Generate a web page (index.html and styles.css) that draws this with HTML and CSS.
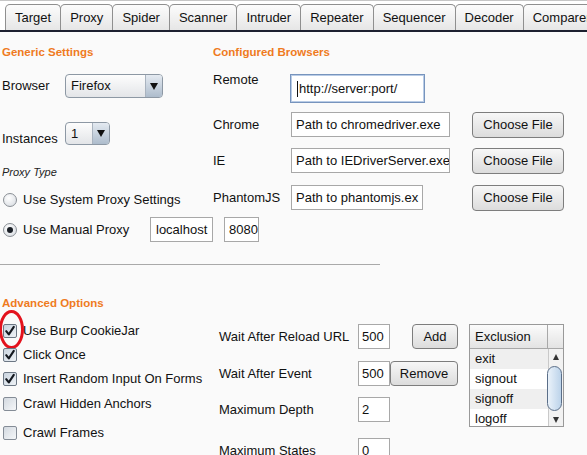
FILE: index.html
```html
<!DOCTYPE html>
<html>
<head>
<meta charset="utf-8">
<link rel="stylesheet" href="styles.css">
</head>
<body>
<div class="tabbar">
  <div class="tab">Target</div>
  <div class="tab">Proxy</div>
  <div class="tab">Spider</div>
  <div class="tab">Scanner</div>
  <div class="tab">Intruder</div>
  <div class="tab">Repeater</div>
  <div class="tab">Sequencer</div>
  <div class="tab">Decoder</div>
  <div class="tab">Comparer</div>
</div>
<div class="top">
  <div class="generic">
    <div class="heading">Generic Settings</div>
    <div class="row browser-row">
      <span class="lbl-browser">Browser</span>
      <div class="select sel-browser"><span class="sel-text">Firefox</span><span class="sel-arrow"><span class="tri"></span></span></div>
    </div>
    <div class="row instances-row">
      <span class="lbl-instances">Instances</span>
      <div class="select sel-inst"><span class="sel-text">1</span><span class="sel-arrow"><span class="tri"></span></span></div>
    </div>
    <div class="proxy-type">Proxy Type</div>
    <div class="radio-row r1"><span class="radio"></span><span class="opt">Use System Proxy Settings</span></div>
    <div class="radio-row r2"><span class="radio checked"></span><span class="opt opt-manual">Use Manual Proxy</span><div class="field host">localhost</div><div class="field port">8080</div></div>
  </div>
  <div class="browsers">
    <div class="heading">Configured Browsers</div>
    <div class="brow remote-row">
      <span class="blabel top-label">Remote</span>
      <div class="field remote"><span class="caret"></span>http://server:port/</div>
    </div>
    <div class="brow chrome-row">
      <span class="blabel">Chrome</span>
      <div class="path-cell"><div class="field path w159">Path to chromedriver.exe</div></div>
      <div class="button choose">Choose File</div>
    </div>
    <div class="brow ie-row">
      <span class="blabel">IE</span>
      <div class="path-cell"><div class="field path w159">Path to IEDriverServer.exe</div></div>
      <div class="button choose">Choose File</div>
    </div>
    <div class="brow phantom-row">
      <span class="blabel">PhantomJS</span>
      <div class="path-cell"><div class="field path w132">Path to phantomjs.ex</div></div>
      <div class="button choose">Choose File</div>
    </div>
  </div>
</div>
<div class="divider"></div>
<div class="advanced">
  <div class="heading adv-heading">Advanced Options</div>
  <div class="adv-body">
    <div class="checks">
      <div class="check-row c1">
        <span class="checkbox checked"><svg width="12" height="12" viewBox="0 0 12 12"><path d="M2.2 6.2 L4.8 9.4 L9.8 1.8" fill="none" stroke="#14181f" stroke-width="2.1" stroke-linecap="round" stroke-linejoin="round"/></svg></span>
        <span class="opt">Use Burp CookieJar</span>
        <svg class="mark" width="26" height="40" viewBox="0 0 26 40"><ellipse cx="12.5" cy="19.5" rx="11" ry="18" fill="none" stroke="#e3121d" stroke-width="3"/></svg>
      </div>
      <div class="check-row c2">
        <span class="checkbox checked"><svg width="12" height="12" viewBox="0 0 12 12"><path d="M2.2 6.2 L4.8 9.4 L9.8 1.8" fill="none" stroke="#14181f" stroke-width="2.1" stroke-linecap="round" stroke-linejoin="round"/></svg></span>
        <span class="opt">Click Once</span>
      </div>
      <div class="check-row c3">
        <span class="checkbox checked"><svg width="12" height="12" viewBox="0 0 12 12"><path d="M2.2 6.2 L4.8 9.4 L9.8 1.8" fill="none" stroke="#14181f" stroke-width="2.1" stroke-linecap="round" stroke-linejoin="round"/></svg></span>
        <span class="opt">Insert Random Input On Forms</span>
      </div>
      <div class="check-row c4">
        <span class="checkbox"></span>
        <span class="opt">Crawl Hidden Anchors</span>
      </div>
      <div class="check-row c5">
        <span class="checkbox"></span>
        <span class="opt">Crawl Frames</span>
      </div>
    </div>
    <div class="adv-right">
      <div class="adv-form">
        <div class="frow f1">
          <span class="flabel">Wait After Reload URL</span>
          <div class="field num">500</div>
          <div class="button add">Add</div>
        </div>
        <div class="frow f2">
          <span class="flabel">Wait After Event</span>
          <div class="field num">500</div>
          <div class="button remove">Remove</div>
        </div>
        <div class="frow f3">
          <span class="flabel">Maximum Depth</span>
          <div class="field num">2</div>
        </div>
        <div class="frow f4">
          <span class="flabel">Maximum States</span>
          <div class="field num">0</div>
        </div>
      </div>
      <div class="exclusion">
        <div class="ex-head">
          <div class="ex-title">Exclusion</div>
          <div class="ex-corner"></div>
        </div>
        <div class="ex-body">
          <div class="ex-list">
            <div class="ex-item alt">exit</div>
            <div class="ex-item">signout</div>
            <div class="ex-item alt">signoff</div>
            <div class="ex-item">logoff</div>
          </div>
          <div class="scrollbar">
            <span class="arrow up"></span>
            <span class="thumb"></span>
            <span class="arrow down"></span>
          </div>
        </div>
      </div>
    </div>
  </div>
</div>
</body>
</html>
```

FILE: styles.css
```css
html, body {
  margin: 0;
  padding: 0;
}
body {
  width: 587px;
  height: 455px;
  overflow: hidden;
  background: #fafafa;
  color: #111;
  font-family: "Liberation Sans", Arial, sans-serif;
  font-size: 13px;
  line-height: 16px;
}

/* ---------- tabs ---------- */
.tabbar {
  display: flex;
  align-items: flex-end;
  height: 32px;
  box-sizing: border-box;
  border-top: 1px solid #c6c6c6;
  border-bottom: 2px solid #1d2030;
  padding-left: 5px;
  background: #ffffff;
  overflow: hidden;
}
.tab {
  flex-shrink: 0;
  height: 26px;
  box-sizing: border-box;
  padding: 1px 9px 0;
  margin-right: -1px;
  border: 1px solid #8f8f8f;
  border-bottom: none;
  border-radius: 5px 5px 0 0;
  background: linear-gradient(#fcfcfc, #e6e6e6);
  display: flex;
  align-items: center;
  white-space: nowrap;
  color: #111;
}

/* ---------- headings ---------- */
.heading {
  color: #ef7b1e;
  font-weight: bold;
  font-size: 11.5px;
  line-height: 16px;
  height: 16px;
  white-space: nowrap;
}

/* ---------- top section ---------- */
.top {
  display: flex;
  padding-top: 12px;
}
.generic {
  width: 211px;
  padding-left: 2px;
  flex-shrink: 0;
}
.row {
  display: flex;
}
.browser-row {
  margin-top: 14px;
  align-items: center;
  height: 24px;
}
.lbl-browser {
  width: 63px;
  flex-shrink: 0;
}
.instances-row {
  margin-top: 24px;
  align-items: flex-start;
}
.lbl-instances {
  width: 63px;
  flex-shrink: 0;
  margin-top: 9px;
}

.select {
  display: flex;
  box-sizing: border-box;
  border: 1px solid #8d98a4;
  border-radius: 4px;
  background: linear-gradient(#fdfdfd, #e3e5e8);
  overflow: hidden;
  flex-shrink: 0;
}
.sel-browser {
  width: 98px;
  height: 24px;
}
.sel-inst {
  width: 45px;
  height: 23px;
}
.sel-text {
  flex: 1;
  padding-left: 5px;
  display: flex;
  align-items: center;
}
.sel-arrow {
  width: 16px;
  border-left: 1px solid #a9b3bf;
  background: linear-gradient(#e4eaf1, #adbccc);
  display: flex;
  align-items: center;
  justify-content: center;
}
.tri {
  width: 0;
  height: 0;
  border-left: 4px solid transparent;
  border-right: 4px solid transparent;
  border-top: 7px solid #111;
}

.proxy-type {
  margin-top: 18px;
  font-style: italic;
  font-size: 11px;
  line-height: 14px;
  color: #222;
}
.radio-row {
  display: flex;
  align-items: center;
  white-space: nowrap;
}
.r1 {
  margin-top: 10px;
  height: 22px;
}
.r2 {
  margin-top: 6px;
  height: 25px;
}
.radio {
  flex-shrink: 0;
  width: 14px;
  height: 14px;
  box-sizing: border-box;
  margin-left: 1px;
  border: 1px solid #8a8f95;
  border-radius: 50%;
  background: radial-gradient(circle at 40% 35%, #ffffff, #e1e4e8 70%, #c9ced4);
  position: relative;
}
.radio.checked::after {
  content: "";
  position: absolute;
  left: 3px;
  top: 3px;
  width: 6px;
  height: 6px;
  border-radius: 50%;
  background: #1a1f26;
}
.opt {
  margin-left: 6px;
  white-space: nowrap;
}
.opt-manual {
  width: 127px;
  flex-shrink: 0;
}

.field {
  flex-shrink: 0;
  box-sizing: border-box;
  border: 1px solid #a8a8a8;
  background: #ffffff;
  height: 25px;
  padding-left: 4px;
  display: flex;
  align-items: center;
  white-space: nowrap;
  overflow: hidden;
}
.host {
  width: 63px;
  padding-left: 5px;
}
.port {
  width: 35px;
  margin-left: 11px;
  padding-left: 4px;
}

/* ---------- configured browsers ---------- */
.browsers {
  flex: 1;
}
.brow {
  display: flex;
  align-items: flex-start;
}
.blabel {
  width: 78px;
  flex-shrink: 0;
  line-height: 25px;
}
.remote-row {
  margin-top: 12px;
}
.remote-row .blabel {
  width: 77px;
  line-height: 16px;
}
.remote {
  margin-top: 2px;
  width: 135px;
  height: 29px;
  border: 1px solid #7794bd;
  box-shadow: inset 0 0 0 1px #b9cce6;
  padding-left: 6px;
}
.caret {
  width: 1px;
  height: 16px;
  background: #111;
  margin-right: 1px;
}
.chrome-row { margin-top: 9px; }
.ie-row { margin-top: 10px; }
.phantom-row { margin-top: 11px; }
.path-cell {
  width: 181px;
  flex-shrink: 0;
}
.w159 { width: 159px; }
.w132 { width: 132px; }

.button {
  flex-shrink: 0;
  box-sizing: border-box;
  border: 1px solid #7d7d7d;
  border-radius: 4px;
  background: linear-gradient(#f7f7f7, #dcdcdc);
  display: flex;
  align-items: center;
  justify-content: center;
  white-space: nowrap;
  color: #111;
}
.choose {
  width: 92px;
  height: 26px;
}

.divider {
  width: 380px;
  height: 1px;
  background: #a9a9a9;
  margin-top: 22px;
}

/* ---------- advanced ---------- */
.advanced {
  padding-left: 2px;
}
.adv-heading {
  margin-top: 30px;
}
.adv-body {
  display: flex;
  align-items: flex-start;
  margin-top: 10px;
}
.checks {
  width: 217px;
  flex-shrink: 0;
}
.check-row {
  display: flex;
  align-items: center;
  height: 20px;
  position: relative;
}
.c2 { margin-top: 4px; }
.c3 { margin-top: 4px; }
.c4 { margin-top: 5px; }
.c5 { margin-top: 9px; }
.checkbox {
  flex-shrink: 0;
  width: 14px;
  height: 14px;
  box-sizing: border-box;
  margin-left: 1px;
  border: 1px solid #848c96;
  border-radius: 2px;
  background: linear-gradient(135deg, #d3d9e0, #f5f7f9);
  display: flex;
  align-items: center;
  justify-content: center;
}
.checkbox.checked {
  border-color: #6c7784;
  background: linear-gradient(135deg, #c9d3de, #eef2f6);
}
.mark {
  position: absolute;
  left: -3px;
  top: -11px;
}

.adv-right {
  display: flex;
  align-items: flex-start;
  margin-top: 3px;
}
.adv-form {
  width: 239px;
  flex-shrink: 0;
}
.frow {
  display: flex;
  align-items: center;
  height: 25px;
}
.f2 { margin-top: 12px; }
.f3 { margin-top: 11px; }
.f4 { margin-top: 16px; }
.flabel {
  width: 139px;
  flex-shrink: 0;
  white-space: nowrap;
}
.num {
  width: 32px;
  padding-left: 3px;
}
.add {
  width: 46px;
  height: 25px;
  margin-left: 22px;
}
.remove {
  width: 68px;
  height: 25px;
}

.exclusion {
  margin-left: 11px;
  width: 95px;
  height: 103px;
  box-sizing: border-box;
  border: 1px solid #999;
  background: #fff;
  flex-shrink: 0;
  overflow: hidden;
}
.ex-head {
  display: flex;
  height: 23px;
  border-bottom: 1px solid #a8a8a8;
  background: linear-gradient(#fbfbfb, #e3e3e3);
}
.ex-title {
  width: 78px;
  border-right: 1px solid #a8a8a8;
  padding-left: 5px;
  box-sizing: border-box;
  display: flex;
  align-items: center;
}
.ex-corner {
  flex: 1;
}
.ex-body {
  display: flex;
}
.ex-list {
  width: 78px;
}
.ex-item {
  height: 20px;
  line-height: 20px;
  padding-left: 5px;
  background: #ffffff;
}
.ex-item.alt {
  background: #efefef;
}
.scrollbar {
  flex: 1;
  height: 79px;
  border-left: 1px solid #c9c9c9;
  background: #f2f2f2;
  position: relative;
  display: flex;
  flex-direction: column;
  align-items: center;
}
.arrow {
  width: 0;
  height: 0;
  border-left: 3px solid transparent;
  border-right: 3px solid transparent;
}
.arrow.up {
  margin-top: 5px;
  border-bottom: 6px solid #333;
}
.arrow.down {
  margin-top: auto;
  margin-bottom: 5px;
  border-top: 6px solid #333;
}
.thumb {
  position: absolute;
  left: -2px;
  top: 17px;
  width: 15px;
  height: 45px;
  box-sizing: border-box;
  border: 1px solid #5a6e88;
  border-radius: 8px;
  background: linear-gradient(90deg, #eaf2fa, #bcd3ea);
}
```
